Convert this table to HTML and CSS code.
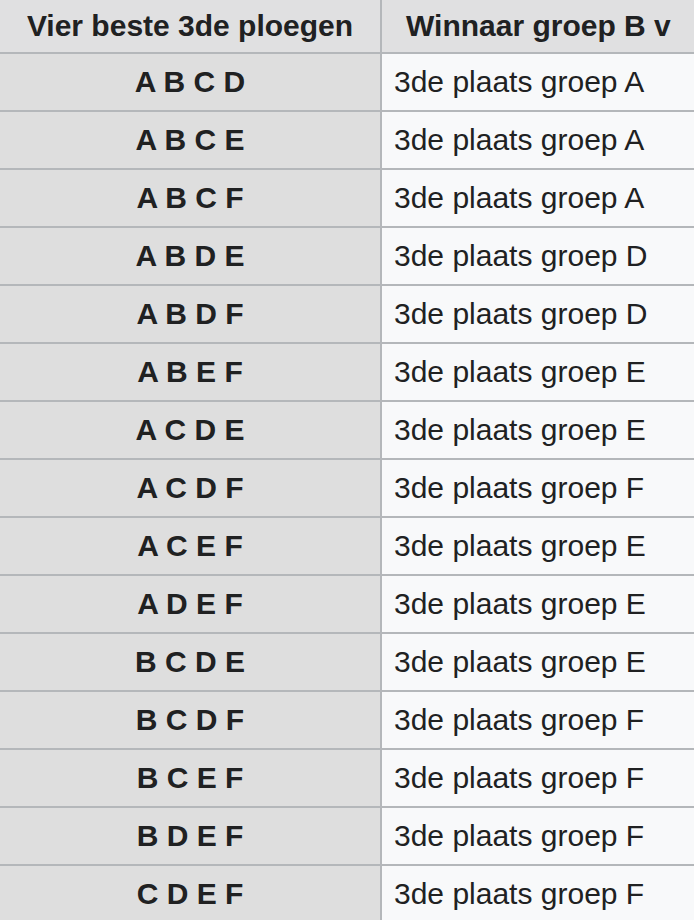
FILE: index.html
```html
<!DOCTYPE html>
<html lang="nl">
<head>
<meta charset="utf-8">
<title>Vier beste 3de ploegen</title>
<link rel="stylesheet" href="styles.css">
</head>
<body>
<div class="frame">
<table class="wikitable">
  <thead>
    <tr>
      <th class="col-combo">Vier beste 3de ploegen</th>
      <th class="col-opp">Winnaar groep B v</th>
    </tr>
  </thead>
  <tbody>
    <tr><th class="combo">A B C D</th><td class="opp">3de plaats groep A</td></tr>
    <tr><th class="combo">A B C E</th><td class="opp">3de plaats groep A</td></tr>
    <tr><th class="combo">A B C F</th><td class="opp">3de plaats groep A</td></tr>
    <tr><th class="combo">A B D E</th><td class="opp">3de plaats groep D</td></tr>
    <tr><th class="combo">A B D F</th><td class="opp">3de plaats groep D</td></tr>
    <tr><th class="combo">A B E F</th><td class="opp">3de plaats groep E</td></tr>
    <tr><th class="combo">A C D E</th><td class="opp">3de plaats groep E</td></tr>
    <tr><th class="combo">A C D F</th><td class="opp">3de plaats groep F</td></tr>
    <tr><th class="combo">A C E F</th><td class="opp">3de plaats groep E</td></tr>
    <tr><th class="combo">A D E F</th><td class="opp">3de plaats groep E</td></tr>
    <tr><th class="combo">B C D E</th><td class="opp">3de plaats groep E</td></tr>
    <tr><th class="combo">B C D F</th><td class="opp">3de plaats groep F</td></tr>
    <tr><th class="combo">B C E F</th><td class="opp">3de plaats groep F</td></tr>
    <tr><th class="combo">B D E F</th><td class="opp">3de plaats groep F</td></tr>
    <tr><th class="combo">C D E F</th><td class="opp">3de plaats groep F</td></tr>
  </tbody>
</table>
</div>
</body>
</html>
```
FILE: styles.css
```css
html, body {
  margin: 0;
  padding: 0;
  background: #ffffff;
}

body {
  font-family: "Liberation Sans", Arial, sans-serif;
  color: #202122;
}

.frame {
  width: 694px;
  height: 920px;
  overflow: hidden;
}

.wikitable {
  border-collapse: collapse;
  table-layout: fixed;
  width: 700px;
  margin: -2px 0 0 -2px;
  font-size: 30px;
  background: #f8f9fa;
}

.wikitable th,
.wikitable td {
  border: 2px solid #b4b7ba;
  padding: 0;
  height: 56px;
  white-space: nowrap;
  overflow: hidden;
}

.wikitable thead th {
  height: 52px;
  background: #e0e0e1;
  font-weight: bold;
}

.col-combo {
  width: 380px;
  text-align: center;
}

.col-opp {
  text-align: left;
  padding-left: 24px !important;
}

.combo {
  background: #dedede;
  text-align: center;
  font-weight: bold;
}

.opp {
  background: #f8f9fa;
  text-align: left;
  padding-left: 12px !important;
}
```
